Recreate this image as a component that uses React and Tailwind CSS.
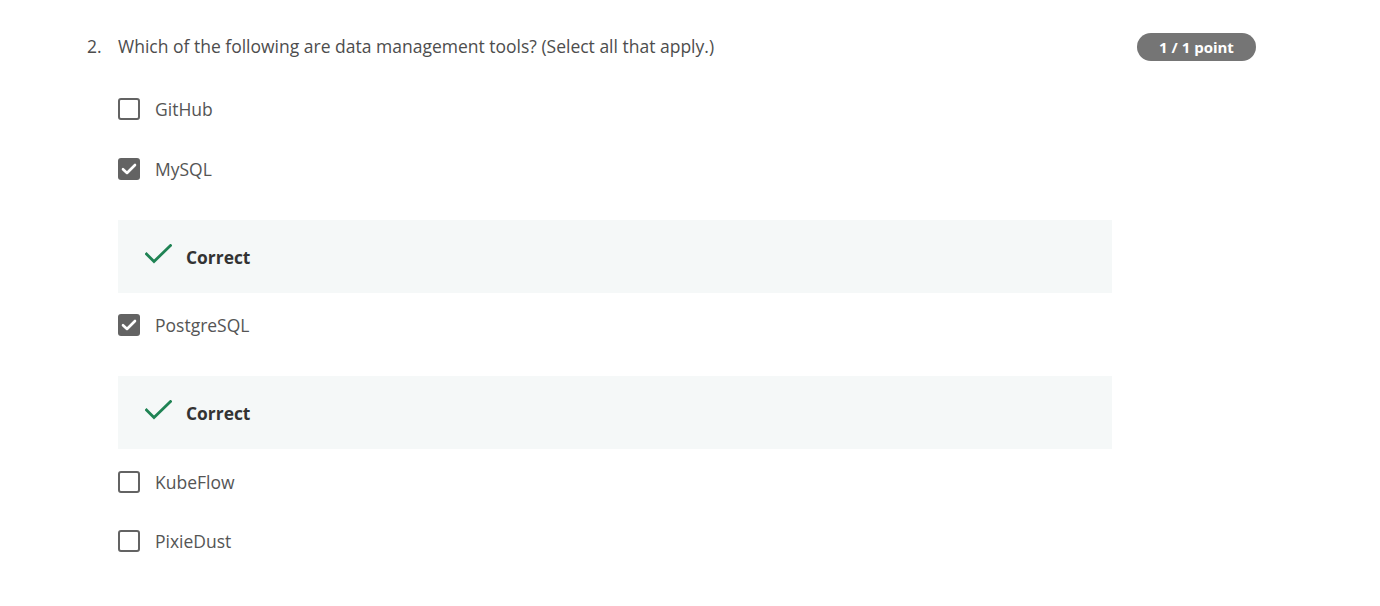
import React from "react";

const font = { fontFamily: '"Open Sans", "Noto Sans", sans-serif' };

function Box({ checked }) {
  if (checked) {
    return (
      <div className="w-[22px] h-[22px] rounded-[3px] bg-[#636363] flex items-center justify-center shrink-0">
        <svg width="16" height="12" viewBox="0 0 16 12" fill="none">
          <path d="M2 6.2 L6 10 L14 2" stroke="#ffffff" strokeWidth="2.6" strokeLinecap="round" strokeLinejoin="round" />
        </svg>
      </div>
    );
  }
  return <div className="w-[22px] h-[22px] rounded-[3px] border-2 border-[#636363] bg-white shrink-0" />;
}

function Option({ label, checked, className }) {
  return (
    <div className={"flex items-center gap-[15px] h-[22px] " + (className || "")}>
      <Box checked={checked} />
      <span className="text-[17.5px] text-[#555555] leading-none mt-[2px]">{label}</span>
    </div>
  );
}

function Feedback({ className }) {
  return (
    <div className={"w-[994px] h-[73px] bg-[#f5f8f8] flex items-center pl-[27px] gap-[14px] " + (className || "")}>
      <svg width="27" height="20" viewBox="0 0 27 20" fill="none" className="-mt-[6px]">
        <path d="M1.5 10 L9 17.5 L25.5 1.5" stroke="#1f8354" strokeWidth="2.8" strokeLinecap="square" />
      </svg>
      <span className="text-[17.4px] font-bold text-[#333333] mt-[1px]">Correct</span>
    </div>
  );
}

export default function App() {
  return (
    <div className="w-[1380px] h-[606px] bg-white" style={font}>
      <div className="pl-[87px] pt-[33px]" style={{ width: 1256 }}>
        <div className="flex items-center h-[28px]">
          <span className="w-[31px] text-[17.5px] text-[#4d4d4d] -mt-[2px]">2.</span>
          <span className="flex-1 text-[17.5px] text-[#4d4d4d] -mt-[2px]">
            Which of the following are data management tools? (Select all that apply.)
          </span>
          <span className="h-[28px] w-[119px] rounded-full bg-[#757575] text-white text-[15px] font-bold flex items-center justify-center">
            1 / 1 point
          </span>
        </div>
        <div className="ml-[31px] flex flex-col">
          <Option label="GitHub" className="mt-[37px]" />
          <Option label="MySQL" checked className="mt-[38px]" />
          <Feedback className="mt-[40px]" />
          <Option label="PostgreSQL" checked className="mt-[21px]" />
          <Feedback className="mt-[40px]" />
          <Option label="KubeFlow" className="mt-[22px]" />
          <Option label="PixieDust" className="mt-[37px]" />
        </div>
      </div>
    </div>
  );
}
